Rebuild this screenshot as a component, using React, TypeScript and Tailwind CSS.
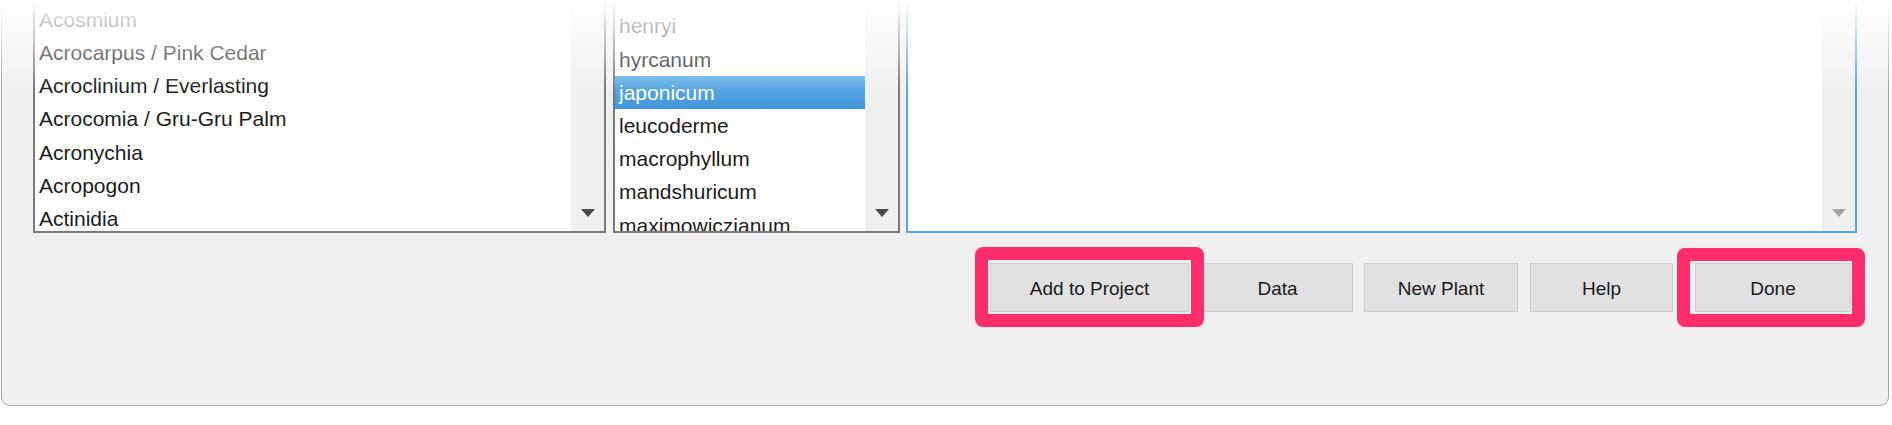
import React from 'react'

const genera = [
  'Acosmium',
  'Acrocarpus / Pink Cedar',
  'Acroclinium / Everlasting',
  'Acrocomia / Gru-Gru Palm',
  'Acronychia',
  'Acropogon',
  'Actinidia',
]

const species = [
  'henryi',
  'hyrcanum',
  'japonicum',
  'leucoderme',
  'macrophyllum',
  'mandshuricum',
  'maximowiczianum',
]

const DownArrow = ({ color }: { color: string }) => (
  <svg width="14" height="8" viewBox="0 0 14 8">
    <path d="M0 0 L14 0 L7 8 Z" fill={color} />
  </svg>
)

const ScrollColumn = ({ light }: { light?: boolean }) => (
  <div className="flex w-[33px] shrink-0 flex-col items-center justify-end bg-[#f0f0f0] pb-[14px]">
    <DownArrow color={light ? '#a3a3a3' : '#4b4b4b'} />
  </div>
)

const Btn = ({ label, w }: { label: string; w: string }) => (
  <button className={`h-[49px] ${w} border border-[#cdcdcd] bg-[#e1e1e1] pt-[4px] text-[19px] text-[#1a1a1a]`}>
    {label}
  </button>
)

export default function App() {
  const selected = 'japonicum'

  return (
    <div className="relative h-[425px] w-[1892px] overflow-hidden bg-white font-['Liberation_Sans',Arial,sans-serif]">
      <div className="ml-px flex h-[406px] w-[1888px] flex-col rounded-b-[9px] border-x border-b border-[#a6a6a6] bg-[#f0f0f0]">
        <div className="-mt-[10px] flex h-[243px] pl-[31px]">
          {/* genus list */}
          <div className="flex w-[573px] border-x-2 border-b-2 border-[#7a7a7a] bg-white">
            <div className="flex-1 overflow-hidden pt-[13px] pl-[4px]">
              {genera.map((g) => (
                <div key={g} className="flex h-[33.2px] items-center text-[21px] text-[#1c1c1c]">
                  {g}
                </div>
              ))}
            </div>
            <ScrollColumn />
          </div>

          {/* species list */}
          <div className="ml-[7px] flex w-[287px] border-x-2 border-b-2 border-[#7a7a7a] bg-white">
            <div className="flex-1 overflow-hidden pt-[19.6px]">
              {species.map((s) => (
                <div
                  key={s}
                  className={
                    s === selected
                      ? 'flex h-[33.2px] items-center bg-linear-to-b from-[#66b2e8] to-[#3f95d8] pl-[4px] text-[21px] text-white'
                      : 'flex h-[33.2px] items-center pl-[4px] text-[21px] text-[#1c1c1c]'
                  }
                >
                  {s}
                </div>
              ))}
            </div>
            <ScrollColumn />
          </div>

          {/* notes area */}
          <div className="ml-[6px] flex w-[951px] border-x-2 border-b-2 border-[#55a6e3] bg-white">
            <div className="flex-1" />
            <ScrollColumn light />
          </div>
        </div>

        <div className="mt-[30px] flex pl-[988px]">
          <div className="relative">
            <Btn label="Add to Project" w="w-[199px]" />
            <div className="pointer-events-none absolute -top-[16px] -bottom-[15px] -left-[15px] -right-[15px] rounded-[8px] border-[13px] border-[#ff2d6b]" />
          </div>
          <div className="ml-[13px]">
            <Btn label="Data" w="w-[151px]" />
          </div>
          <div className="ml-[11px]">
            <Btn label="New Plant" w="w-[154px]" />
          </div>
          <div className="ml-[12px]">
            <Btn label="Help" w="w-[143px]" />
          </div>
          <div className="relative ml-[22px]">
            <Btn label="Done" w="w-[156px]" />
            <div className="pointer-events-none absolute -top-[15px] -bottom-[15px] -left-[18px] -right-[14px] rounded-[8px] border-[13px] border-[#ff2d6b]" />
          </div>
        </div>
      </div>

      <div className="pointer-events-none absolute top-0 left-0 right-0 h-[90px] bg-linear-to-b from-white to-transparent" />
    </div>
  )
}
